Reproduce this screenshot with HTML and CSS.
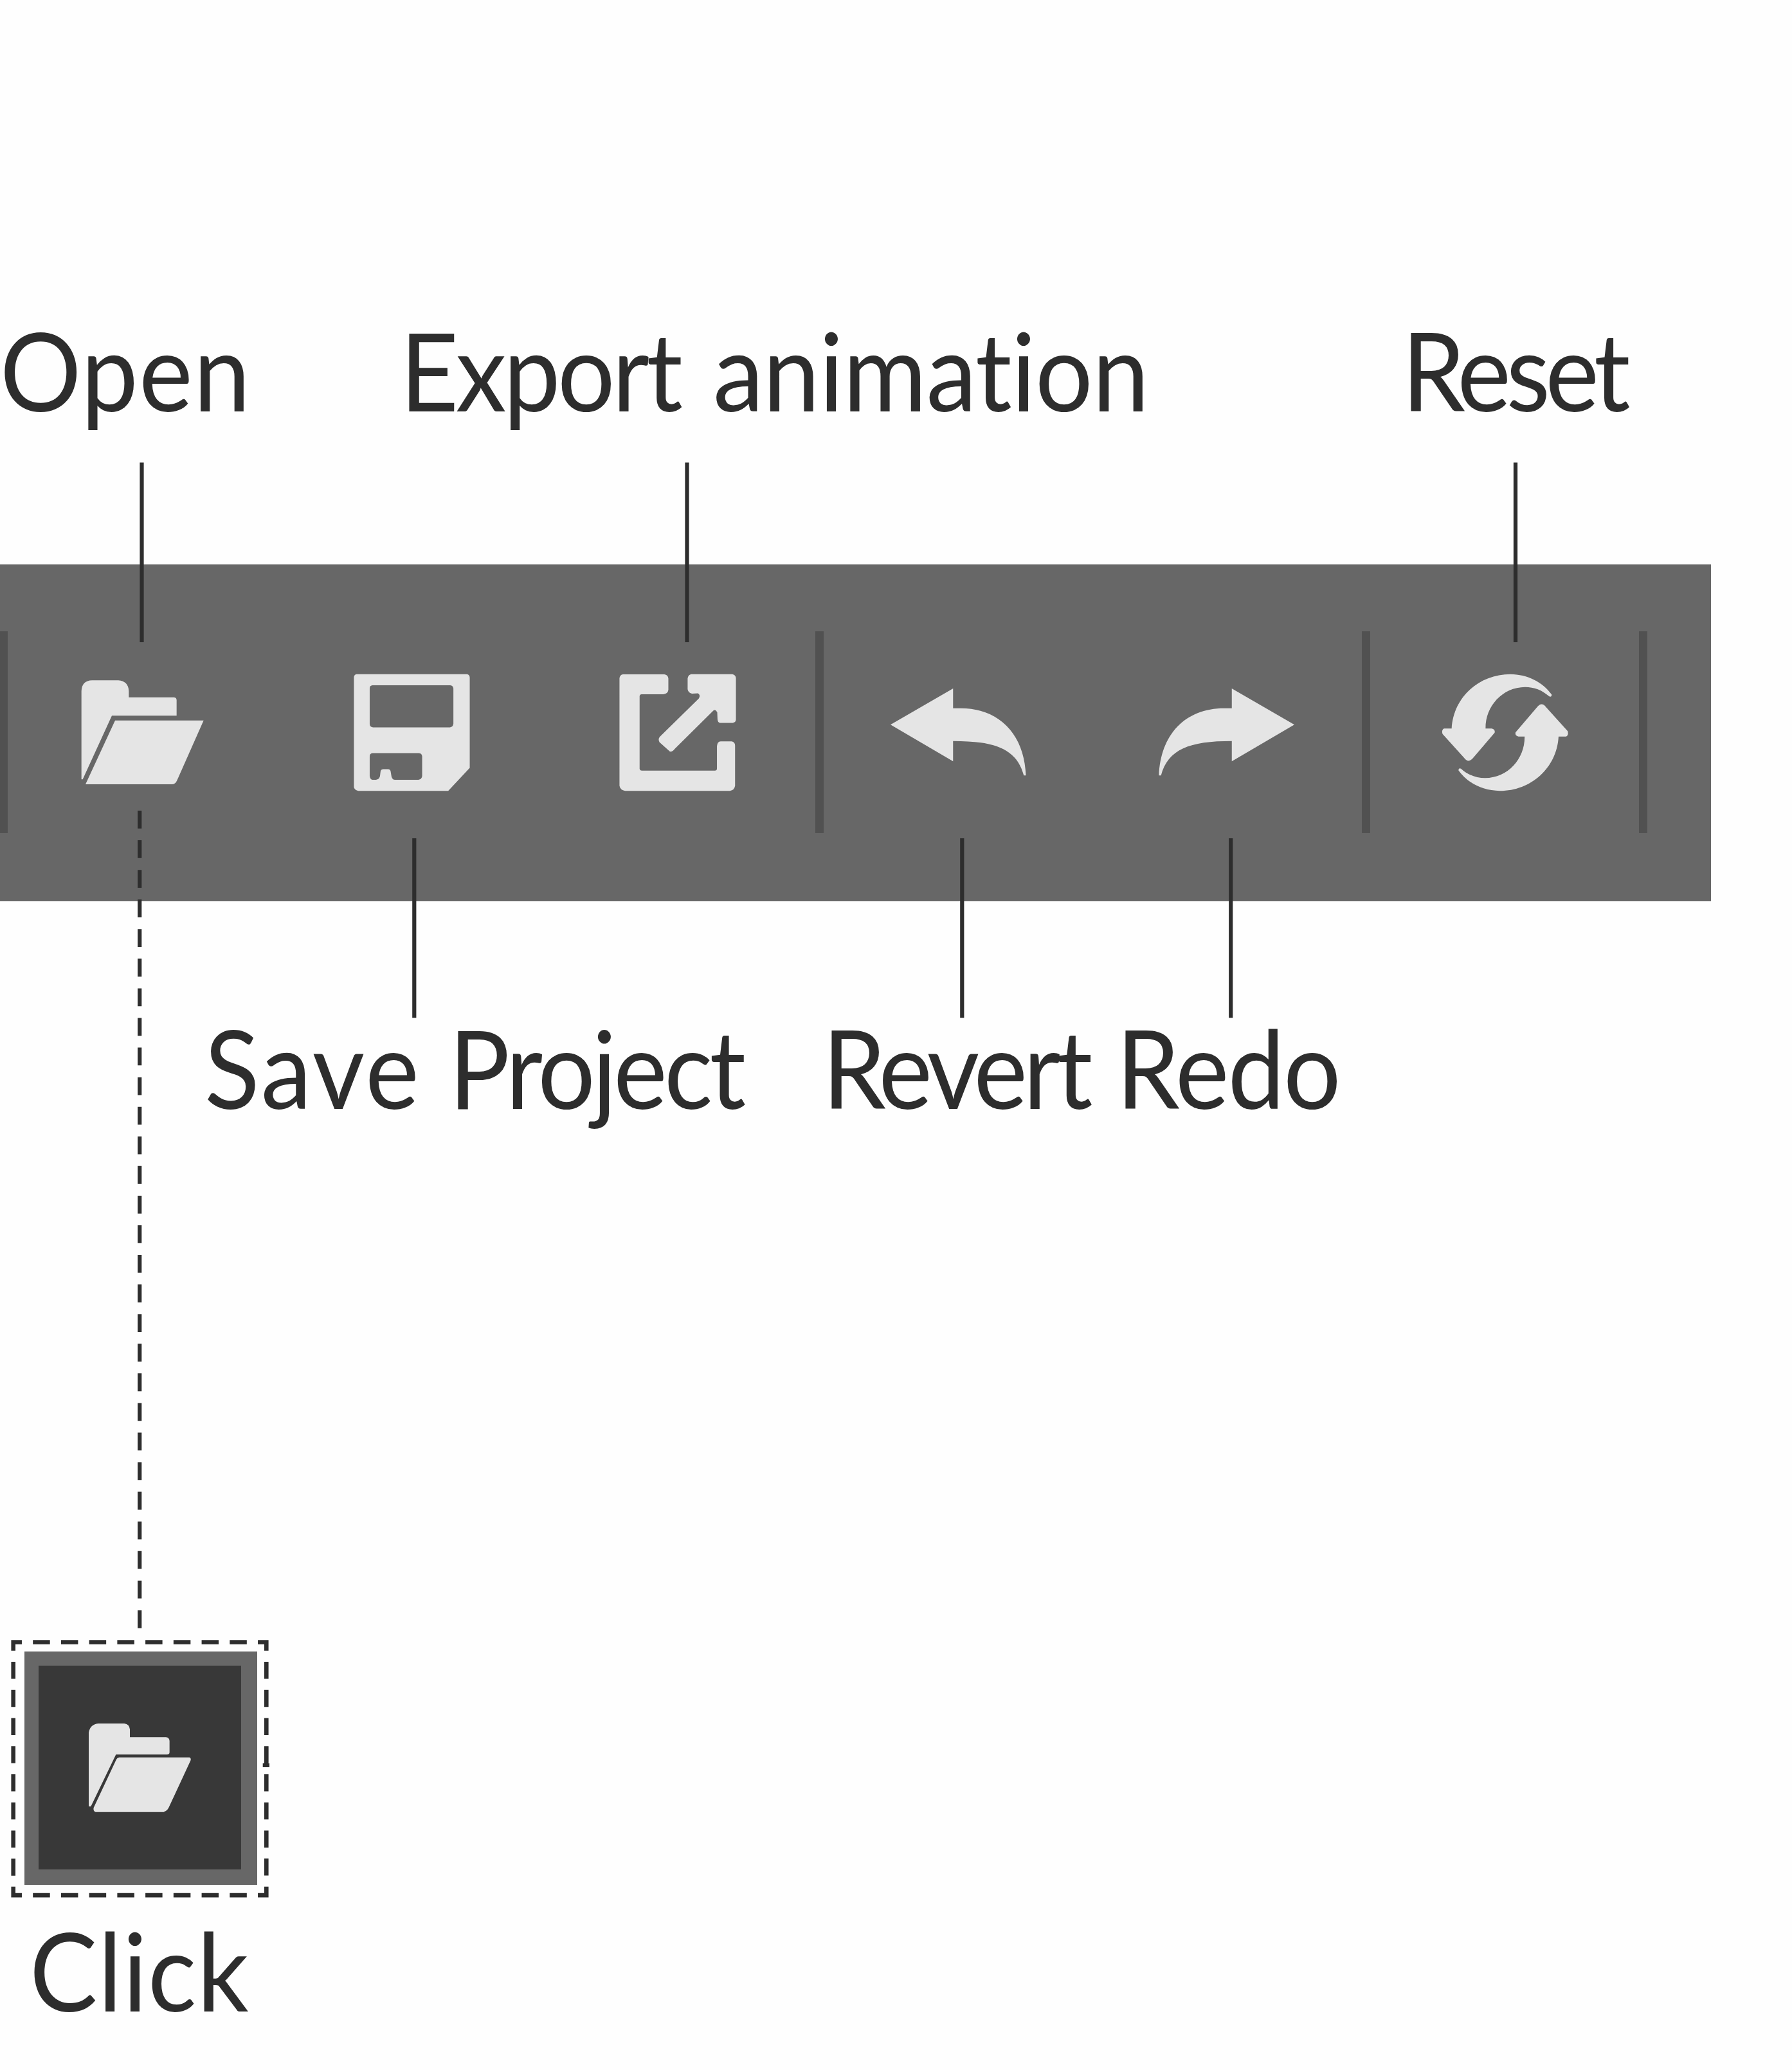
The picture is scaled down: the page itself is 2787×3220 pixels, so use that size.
FILE: index.html
```html
<!DOCTYPE html>
<html lang="en">
<head>
<meta charset="utf-8">
<title>Toolbar guide</title>
<link rel="stylesheet" href="styles.css">
</head>
<body>
<main class="guide">
  <div class="labels labels-top">
    <div class="label open"><span class="word w-open">Open</span></div>
    <div class="label export"><span class="word w-export">Export</span> <span class="word w-animation">animation</span></div>
    <div class="label reset"><span class="word w-reset">Reset</span></div>
  </div>

  <nav class="toolbar">
    <i class="separator sep-start"></i>
    <svg class="icon folder" viewBox="375 288 582 498">
      <path d="M380 757V345Q382 296 430 295H552Q599 299 601 345V374H812Q824 375 824 388V460H522L386 757Z"/>
      <path d="M537 482H950L826 762Q818 780 802 780H399Z"/>
    </svg>
    <svg class="icon save" viewBox="112 144 406 550" preserveAspectRatio="none">
      <path fill-rule="evenodd" d="M122 146H507Q517 148 517 162V584L442 692H128Q114 688 113 674V160Q114 148 122 146ZM178 198Q168 199 168 212V380Q169 394 180 395H448Q459 393 460 378V212Q458 198 448 198ZM178 515Q168 517 168 530V622Q169 639 178 640H190Q202 638 204 622L206 600Q208 590 216 590H232Q240 591 241 600L244 624Q247 640 256 640H338Q350 638 351 622V530Q350 516 340 515Z"/>
    </svg>
    <svg class="icon share" viewBox="1037 144 407 550" preserveAspectRatio="none">
      <path d="M1050 147H1194Q1207 150 1208 166V220Q1206 239 1190 240H1115Q1108 241 1108 250V588Q1109 597 1116 597H1370Q1377 596 1377 588V482Q1378 461 1390 460H1428Q1440 463 1440 480V668Q1438 689 1422 692H1058Q1040 688 1038 668V164Q1040 149 1050 147Z"/>
      <path d="M1288 146H1430Q1442 149 1443 164V360Q1442 372 1432 374H1388Q1380 372 1379 358L1378 324Q1370 306 1362 320L1230 496Q1218 518 1207 500L1177 464Q1171 450 1179 438L1314 260Q1321 245 1311 236L1290 237Q1276 232 1275 216V166Q1277 148 1288 146Z"/>
    </svg>
    <i class="separator sep-edit"></i>
    <svg class="icon undo" viewBox="98 152 460 408" preserveAspectRatio="none">
      <path d="M98 321L310 152V244H335C470 244 552 370 557 558H550C526 435 454 397 310 397V492Z"/>
    </svg>
    <svg class="icon redo" viewBox="98 152 460 408" preserveAspectRatio="none">
      <path transform="translate(656) scale(-1 1)" d="M98 321L310 152V244H335C470 244 552 370 557 558H550C526 435 454 397 310 397V492Z"/>
    </svg>
    <i class="separator sep-reset"></i>
    <svg class="icon refresh" viewBox="370 527 518 513" preserveAspectRatio="none">
      <path id="half" d="M411 766C418 630 522 529 650 529C720 530 781 563 818 618Q818 630 808 626C779 598 746 585 710 585C616 586 548 670 549 766H574Q589 770 586 784L500 892Q480 920 462 894L374 790Q369 772 380 766Z"/>
      <use href="#half" transform="rotate(180 628.5 783.5)"/>
    </svg>
    <i class="separator sep-end"></i>
  </nav>

  <div class="labels labels-bottom">
    <div class="label save-project"><span class="word w-save">Save</span> <span class="word w-project">Project</span></div>
    <div class="label revert"><span class="word w-revert">Revert</span></div>
    <div class="label redo-label"><span class="word w-redo">Redo</span></div>
  </div>

  <section class="state">
    <div class="state-frame">
      <div class="state-button">
        <svg class="small-folder" viewBox="411 540 483 420">
          <path d="M414 930V585Q420 548 458 543H580Q604 546 606 570V607H774Q790 609 791 624V678Q790 688 780 688H541L424 930Z"/>
          <path d="M556 701H884Q893 704 889 716L788 934Q778 956 758 956H446Q434 953 437 936L543 710Q547 702 556 701Z"/>
        </svg>
      </div>
    </div>
    <div class="label click"><span class="word w-click">Click</span></div>
  </section>

  <svg class="leaders" viewBox="0 0 2787 3220">
    <path d="M220.5 719.5V999M1068.5 719.5V999M2357 719.5V999M644.3 1304V1583.3M1496.3 1304V1583.3M1914.2 1304V1583.3"/>
    <path class="link" d="M217.2 1261V2533.4"/>
    <rect class="frame-dashes" x="20.7" y="2554.5" width="393.6" height="393.6"/>
    <path d="M414 2717V2746M408.7 2746H419"/>
  </svg>
</main>
</body>
</html>
```
FILE: styles.css
```css
* { box-sizing: border-box; }
body { margin: 0; background: #fefefe; }
.guide {
  position: relative;
  width: 2787px;
  height: 3220px;
  overflow: hidden;
  color: #2d2d2d;
  font-family: Lato, "Open Sans", sans-serif;
  font-size: 168px;
  font-variant-ligatures: none;
  line-height: 200px;
}
.labels { display: flex; align-items: flex-start; }
.labels-top { height: 878px; padding-top: 475px; }
.labels-bottom { height: 1149px; padding-top: 158px; }
.label { display: flex; flex: none; white-space: nowrap; }
.word { flex: none; transform: scaleX(.94); transform-origin: 0 0; }
.open { width: 622px; }
.export { width: 1558px; }
.reset { width: 400px; }
.save-project { width: 960.5px; margin-left: 318px; }
.revert { width: 457px; }
.redo-label { width: 400px; }

.w-open { letter-spacing: 1.5px; }
.w-export { width: 487px; letter-spacing: -4.7px; }
.w-animation { letter-spacing: -.8px; }
.w-reset { letter-spacing: -7.8px; }
.w-save { width: 380px; letter-spacing: 3.4px; }
.w-project { letter-spacing: -5px; }
.w-revert { letter-spacing: -6.8px; }
.w-redo { letter-spacing: -2px; }
.w-click { letter-spacing: 1.2px; }

.toolbar {
  display: flex;
  align-items: flex-start;
  width: 2661px;
  height: 524px;
  background: #676767;
}
.separator { flex: none; width: 13px; height: 314px; margin-top: 104px; background: #515151; }
.icon { flex: none; display: block; fill: #e5e5e5; }
.sep-start { width: 12px; }
.folder { width: 194px; height: 166px; margin: 178px 0 0 113px; }
.save { width: 181px; height: 183px; margin: 170px 0 0 231px; }
.share { width: 182px; height: 183px; margin: 170px 0 0 232px; }
.sep-edit { margin-left: 123px; }
.undo { width: 211px; height: 136px; margin: 193px 0 0 104px; }
.redo { width: 211px; height: 136px; margin: 193px 0 0 206px; }
.sep-reset { margin-left: 105px; }
.refresh { width: 198px; height: 183px; margin: 170px 0 0 110.5px; }
.sep-end { margin-left: 109.5px; }

.state { padding-left: 17px; }
.state-frame { width: 401px; height: 401px; padding: 18px 0 0 21px; }
.state-button {
  display: flex;
  width: 362px;
  height: 363px;
  padding: 89px 0 0 77px;
  border: solid #676767;
  border-width: 22px 25px 24px 22px;
  background: #383838;
}
.small-folder { flex: none; width: 161px; height: 140px; fill: #e5e5e5; }
.click { padding: 12px 0 0 29px; }

.leaders {
  position: absolute;
  inset: 0;
  width: 2787px;
  height: 3220px;
  fill: none;
  stroke: #2d2d2d;
  stroke-width: 6.2;
  pointer-events: none;
}
.link { stroke-dasharray: 27.8 18.27; }
.frame-dashes { stroke-width: 6.6; stroke-dasharray: 26.5 17.233; stroke-dashoffset: 13.25; }
```
